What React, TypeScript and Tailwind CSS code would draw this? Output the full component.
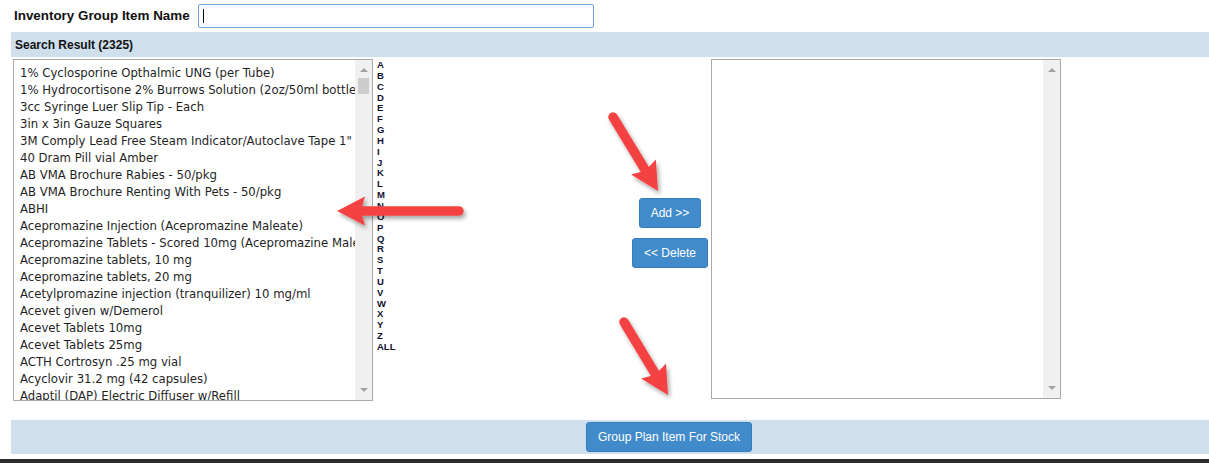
const items = [
  "1% Cyclosporine Opthalmic UNG (per Tube)",
  "1% Hydrocortisone 2% Burrows Solution (2oz/50ml bottle)",
  "3cc Syringe Luer Slip Tip - Each",
  "3in x 3in Gauze Squares",
  '3M Comply Lead Free Steam Indicator/Autoclave Tape 1"',
  "40 Dram Pill vial Amber",
  "AB VMA Brochure Rabies - 50/pkg",
  "AB VMA Brochure Renting With Pets - 50/pkg",
  "ABHI",
  "Acepromazine Injection (Acepromazine Maleate)",
  "Acepromazine Tablets - Scored 10mg (Acepromazine Maleate)",
  "Acepromazine tablets, 10 mg",
  "Acepromazine tablets, 20 mg",
  "Acetylpromazine injection (tranquilizer) 10 mg/ml",
  "Acevet given w/Demerol",
  "Acevet Tablets 10mg",
  "Acevet Tablets 25mg",
  "ACTH Cortrosyn .25 mg vial",
  "Acyclovir 31.2 mg (42 capsules)",
  "Adaptil (DAP) Electric Diffuser w/Refill",
];

const letters = "ABCDEFGHIJKLMNOPQRSTUVWXYZ".split("");

function Scrollbar({ thumb }: { thumb?: boolean }) {
  return (
    <div className="w-[17px] bg-[#f0f0f0] flex flex-col items-center pt-[8px] pb-[8px]">
      <div className="w-0 h-0 border-x-[4px] border-x-transparent border-b-[4px] border-b-[#a3a3a3]" />
      {thumb && <div className="mt-[6px] w-[11px] h-[16px] bg-[#cdcdcd]" />}
      <div className="flex-1" />
      <div className="w-0 h-0 border-x-[4px] border-x-transparent border-t-[4px] border-t-[#a3a3a3]" />
    </div>
  );
}

// red annotation arrow, tail -> tip
function Arrow({ x1, y1, x2, y2 }: { x1: number; y1: number; x2: number; y2: number }) {
  const dx = x2 - x1;
  const dy = y2 - y1;
  const len = Math.hypot(dx, dy);
  const ux = dx / len;
  const uy = dy / len;
  const px = -uy;
  const py = ux;
  const head = 28;
  const half = 14.5;
  const bx = x2 - ux * head;
  const by = y2 - uy * head;
  const sx = bx + ux * 4;
  const sy = by + uy * 4;
  const pts = [
    [x2, y2],
    [bx + px * half, by + py * half],
    [bx + ux * 3 + px * 4, by + uy * 3 + py * 4],
    [bx + ux * 3 - px * 4, by + uy * 3 - py * 4],
    [bx - px * half, by - py * half],
  ]
    .map((p) => p.join(","))
    .join(" ");
  return (
    <g filter="url(#shadow)">
      <line x1={x1} y1={y1} x2={sx} y2={sy} stroke="#f44343" strokeWidth={9.5} strokeLinecap="round" />
      <polygon points={pts} fill="#f44343" />
    </g>
  );
}

export default function App() {
  return (
    <div className="relative w-[1209px] h-[463px] overflow-hidden bg-white font-['Liberation_Sans',Arial,sans-serif]">
      <div className="flex items-center pt-[4px] pl-[14px]">
        <span className="w-[176px] text-[13.4px] font-bold text-[#111]">Inventory Group Item Name</span>
        <div className="ml-[8px] w-[396px] h-[24px] border border-[#6f9fd8] rounded-[2px] flex items-center pl-[4px]">
          <span className="w-px h-[14px] bg-black" />
        </div>
      </div>

      <div className="mt-[4px] ml-[11px] h-[25px] bg-[#cfdfec] flex items-center pl-[4px]">
        <span className="text-[12px] font-bold text-[#111]">Search Result (2325)</span>
      </div>

      <div className="mt-[2px] flex items-start pl-[13px]">
        <div className="w-[360px] h-[342px] border border-[#a9a9a9] bg-white flex">
          <div className="flex-1 overflow-hidden pt-[5px] pl-[6px] font-['DejaVu_Sans',sans-serif] text-[11.7px] leading-[17px] text-[#1f1f1f] whitespace-nowrap">
            {items.map((it) => (
              <div key={it}>{it}</div>
            ))}
          </div>
          <Scrollbar thumb />
        </div>

        <div className="ml-[4px] w-[24px] mt-[1px] flex flex-col text-[9.5px] leading-[10.85px] font-bold text-[#101030]">
          {letters.map((l) => (
            <span key={l}>{l}</span>
          ))}
          <span>ALL</span>
        </div>

        <div className="w-[310px] flex justify-end pr-[3px] pt-[139px]">
          <div className="w-[76px] flex flex-col items-center gap-[10px]">
            <button className="h-[30px] px-[11px] bg-[#428bca] border border-[#357ebd] rounded-[3px] text-white text-[12px]">
              Add &gt;&gt;
            </button>
            <button className="h-[30px] px-[11px] bg-[#428bca] border border-[#357ebd] rounded-[3px] text-white text-[12px] whitespace-nowrap">
              &lt;&lt; Delete
            </button>
          </div>
        </div>

        <div className="w-[350px] h-[340px] border border-[#a9a9a9] bg-white flex">
          <div className="flex-1" />
          <Scrollbar />
        </div>
      </div>

      <div className="mt-[19px] ml-[11px] w-[1316px] h-[34px] bg-[#cfdfec] flex items-center justify-center">
        <button className="h-[30px] px-[11px] bg-[#428bca] border border-[#357ebd] rounded-[3px] text-white text-[12px] whitespace-nowrap">
          Group Plan Item For Stock
        </button>
      </div>

      <div className="mt-[5px] h-[10px] bg-[#2d2d2d]" />

      <svg className="absolute inset-0 pointer-events-none" width={1209} height={463}>
        <defs>
          <filter id="shadow" x="-30%" y="-30%" width="160%" height="160%">
            <feDropShadow dx="2" dy="3" stdDeviation="2" floodColor="#000" floodOpacity="0.35" />
          </filter>
        </defs>
        <Arrow x1={613} y1={117} x2={658} y2={191} />
        <Arrow x1={459} y1={211} x2={337} y2={211} />
        <Arrow x1={624} y1={322} x2={668} y2={395} />
      </svg>
    </div>
  );
}
